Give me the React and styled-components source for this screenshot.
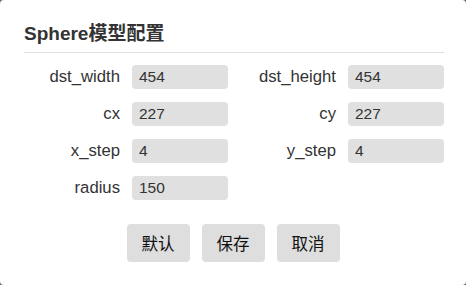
import React from "react";
import styled, { createGlobalStyle } from "styled-components";

const Global = createGlobalStyle`
  html, body { margin: 0; padding: 0; background: #6a6a6a; }
  body { font-family: "Liberation Sans", Arial, "Noto Sans CJK SC", sans-serif; }
`;

const Dialog = styled.div`
  width: 466px;
  height: 285px;
  box-sizing: border-box;
  background: #fff;
  border-radius: 4px;
  padding: 22px 22px 0 24px;
  display: flex;
  flex-direction: column;
`;

const Title = styled.h2`
  margin: 0;
  font-size: 19px;
  line-height: 24px;
  font-weight: bold;
  color: #333;
  padding-bottom: 6px;
  border-bottom: 1px solid #e0e0e0;
  font-family: "Liberation Sans", Arial, "Noto Sans CJK SC", sans-serif;
`;

const Grid = styled.div`
  display: grid;
  grid-template-columns: 96px 96px 96px 96px;
  column-gap: 12px;
  row-gap: 13px;
  margin-top: 12px;
  align-items: center;
`;

const Label = styled.label`
  text-align: right;
  font-size: 16.7px;
  color: #333;
  line-height: 24px;
`;

const Input = styled.input`
  width: 96px;
  height: 24px;
  box-sizing: border-box;
  border: none;
  border-radius: 4px;
  background: #e0e0e0;
  padding: 0 7px;
  font-family: "Liberation Sans", Arial, sans-serif;
  font-size: 15.5px;
  color: #333;
  outline: none;
`;

const Buttons = styled.div`
  display: flex;
  justify-content: center;
  gap: 12px;
  margin-top: 24px;
  padding-right: 2px;
`;

const Button = styled.button`
  width: 63px;
  height: 38px;
  border: none;
  border-radius: 4px;
  background: #dedede;
  font-family: "Noto Sans CJK SC", sans-serif;
  font-size: 16.5px;
  color: #111;
  padding: 0;
  cursor: pointer;
`;

const fields = [
  ["dst_width", "454", "dst_height", "454"],
  ["cx", "227", "cy", "227"],
  ["x_step", "4", "y_step", "4"],
  ["radius", "150"],
];

export default function App() {
  return (
    <>
      <Global />
      <Dialog>
        <Title>Sphere模型配置</Title>
        <Grid>
          {fields.map((row, i) => (
            <React.Fragment key={i}>
              <Label>{row[0]}</Label>
              <Input defaultValue={row[1]} />
              {row[2] ? (
                <>
                  <Label>{row[2]}</Label>
                  <Input defaultValue={row[3]} />
                </>
              ) : null}
            </React.Fragment>
          ))}
        </Grid>
        <Buttons>
          <Button>默认</Button>
          <Button>保存</Button>
          <Button>取消</Button>
        </Buttons>
      </Dialog>
    </>
  );
}
